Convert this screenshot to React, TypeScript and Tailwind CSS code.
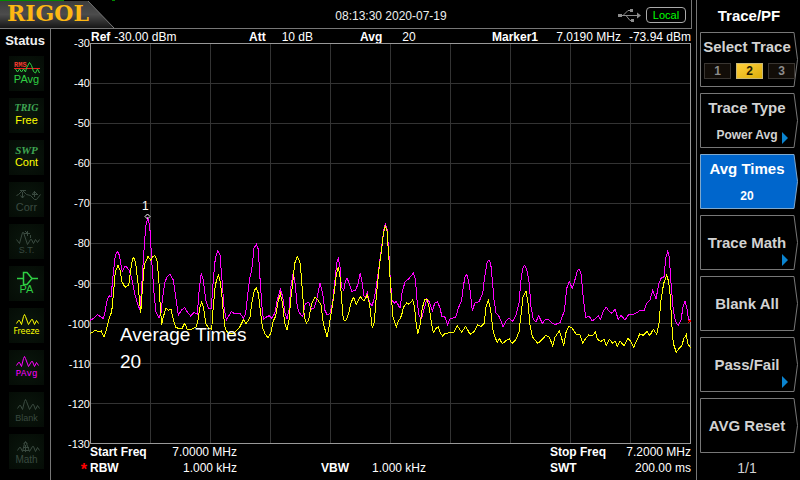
import { useState } from "react";
import type { ReactNode } from "react";
import clsx from "clsx";

type Segment = { x: number; y: number; points: string };

// Trace samples, three units per screen pixel, split in sweep segments
const averageTrace: Segment[] = [
  {
    x: 0,
    y: 471,
    points:
      "0,361 8,357 22,344 32,350 40,356 45,335 50,305 57,287 63,290 70,220 76,168 82,154 88,165 93,195 97,213 105,199 111,202 118,212 125,235 135,285 143,312 150,330 155,260 160,180 167,80 173,55 179,75 185,180 192,280 198,335 207,354 213,340 218,290 225,245 232,230 240,223 250,240 257,290 265,345 275,330 284,322 293,338 302,348 312,337 322,342 328,265 334,220 340,240 347,300 356,326 364,326 370,240 376,175 383,152 390,165 396,240 402,320 409,360 418,345 424,335 434,341 450,340 460,355 467,340 472,295",
  },
  {
    x: 450,
    y: 471,
    points:
      "29,235 35,210 42,145 49,133 55,148 61,250 66,320 70,358 78,352 87,347 95,355 104,340 112,300 121,268 128,290 135,340 141,357 147,330 152,265 160,218 166,255 172,320 178,338 188,350 196,312 206,307 214,328 222,325 230,300 240,250 248,280 254,330 262,345 270,340 278,305 285,240 290,190 295,175 300,200 304,260 311,271 316,245 321,235 328,250 335,274 346,271 353,255 361,220 367,250 372,288 377,292 382,278 389,308 396,317 403,295 410,250 418,195 425,140 431,90 436,72 441,88 446,150 451,240 456,300 463,310 469,304",
  },
  {
    x: 900,
    y: 471,
    points:
      "30,325 36,280 45,245 55,238 63,228 70,220 76,235 82,310 88,350 95,355 103,325 110,298 118,305 127,333 134,310 143,305 150,325 156,350 164,350 173,374 180,356 197,352 205,325 215,300 220,260 225,230 230,223 236,245 241,275 247,333 254,310 268,304 278,280 284,230 291,188 297,180 302,190 307,240 312,300 318,338 328,350 339,380 348,362 358,355 368,364 378,345 387,310 393,240 398,205 404,196 410,208 417,245 423,320 430,358 438,365 446,347",
  },
  {
    x: 1350,
    y: 531,
    points:
      "7,310 15,300 24,298 34,307 44,314 60,308 66,290 73,275 80,205 88,185 97,205 104,182 112,152 118,148 124,165 128,215 134,270 138,293 147,288 157,303 165,297 175,288 182,298 190,272 199,262 208,275 216,280 225,268 235,298 243,286 255,300 266,283 276,285 290,278 301,271 312,273 320,250 330,240 338,211 348,236 357,190 363,175 372,170 377,115 383,94 388,110 393,190 400,270 406,303 415,317 423,300 429,262 435,243 440,262 445,295 452,306",
  },
];

const frozenTrace: Segment[] = [
  {
    x: 0,
    y: 471,
    points:
      "0,401 8,397 15,390 24,394 34,393 42,412 50,385 56,360 65,335 70,285 76,215 84,196 90,210 96,245 105,262 116,255 121,220 127,180 131,172 137,190 144,250 152,340 157,270 163,195 174,169 182,180 188,170 195,167 202,185 207,250 211,320 215,374 220,350 228,325 236,331 243,328 249,355 257,382 265,385 275,387 284,370 292,388 305,387 318,382 324,360 330,320 335,307 341,325 347,370 355,383 365,388 369,330 376,255 385,224 391,245 396,290 401,350 406,388 415,400 430,402 447,385 455,370 460,358 468,372 474,362",
  },
  {
    x: 450,
    y: 471,
    points:
      "30,350 37,300 43,272 49,263 55,280 61,330 67,380 74,400 84,413 92,400 99,365 107,348 113,310 121,281 127,305 134,370 141,391 147,360 152,300 158,250 164,190 172,169 181,190 187,270 193,350 199,370 206,360 214,315 225,290 234,300 243,315 250,370 261,410 267,380 275,330 283,275 289,225 295,200 300,230 305,300 310,358 317,363 326,340 334,305 341,292 349,314 361,290 372,304 382,285 389,315 397,385 403,365 409,290 416,215 425,145 431,95 436,78 441,92 447,180 453,280 459,350 469,382 475,362",
  },
  {
    x: 900,
    y: 471,
    points:
      "30,356 35,345 40,323 50,308 57,313 68,300 74,325 78,365 83,402 90,375 97,325 104,297 111,297 118,325 124,365 130,398 138,385 145,380 151,400 158,408 166,400 192,397 202,377 215,397 227,379 240,403 252,395 263,374 273,380 283,370 287,325 295,300 302,330 308,385 314,410 322,427 328,415 337,431 348,422 358,417 366,430 378,418 387,395 393,345 399,290 408,274 414,310 420,375 427,410 443,430",
  },
  {
    x: 1350,
    y: 531,
    points:
      "0,365 10,355 17,346 28,352 38,377 45,352 58,332 64,350 71,378 77,340 86,319 97,325 108,342 119,343 128,370 137,355 146,345 158,347 166,335 172,357 182,365 192,358 199,377 208,358 218,370 225,363 232,379 240,363 252,377 263,355 273,365 281,382 290,362 299,342 310,346 321,334 329,347 340,328 350,343 357,310 363,240 371,190 380,166 386,185 391,230 395,310 400,370 409,397 417,385 425,378 432,355 439,344 444,372 452,384",
  },
];

const toPoints = (segments: Segment[]) =>
  segments
    .flatMap(({ x, y, points }) =>
      points.split(" ").map((pair) => {
        const [px, py] = pair.split(",").map(Number);
        return `${((px + x) / 3).toFixed(1)},${((py + y) / 3).toFixed(1)}`;
      }),
    )
    .join(" ");

const levels = [-30, -40, -50, -60, -70, -80, -90, -100, -110, -120, -130];
const divisions = [1, 2, 3, 4, 5, 6, 7, 8, 9];

const wave =
  "7.5,15.5 9.5,12.5 10.5,12.5 12.5,16.5 14.5,8.5 15.5,6.5 16.5,8.5 19.5,16.5 22.5,11.5 23.5,11.5 25.5,16.5 27.5,12.5 29.5,15.5";
const dimWave =
  "8.5,16.5 10.5,13.5 11.5,13.5 13.5,17.5 15.5,9.5 16.5,7.5 17.5,9.5 20.5,17.5 23.5,12.5 24.5,12.5 26.5,17.5 28.5,13.5 30.5,16.5";

const StatusIcon = ({ children }: { children: ReactNode }) => (
  <svg
    aria-hidden
    viewBox="0 0 35 21"
    className="h-[21px] w-full"
    fill="none"
    stroke="currentColor"
  >
    {children}
  </svg>
);

const statusItems: {
  id: string;
  label: string;
  color: string;
  labelClass: string;
  icon: ReactNode;
}[] = [
  {
    id: "detector",
    label: "PAvg",
    color: "text-[#2fd043]",
    labelClass: "-mt-1 text-[11px]",
    icon: (
      <StatusIcon>
        <text x="5" y="11" fill="#f03a30" stroke="none" className="font-mono text-[7px] font-bold">
          RMS
        </text>
        <path d="M5 12.5H31" stroke="#f02020" />
        <polyline points="6.5,13 8.5,16 10.5,13 12.5,16 14.5,13 16.5,16 17.5,12 20.5,6.5 22.5,9.5 24.5,15.5 26.5,17 28.5,13 30.5,17" />
      </StatusIcon>
    ),
  },
  {
    id: "trigger",
    label: "Free",
    color: "text-[#ffff00]",
    labelClass: "-mt-1 text-[11px]",
    icon: (
      <span className="h-5 font-['Liberation_Serif',serif] text-[10px] leading-5 font-bold text-[#3fa653] italic">
        TRIG
      </span>
    ),
  },
  {
    id: "sweep",
    label: "Cont",
    color: "text-[#ffff00]",
    labelClass: "-mt-1 text-[11px]",
    icon: (
      <span className="h-5 font-['Liberation_Serif',serif] text-[11px] leading-5 font-bold text-[#3fa653] italic">
        SWP
      </span>
    ),
  },
  {
    id: "correction",
    label: "Corr",
    color: "text-[#3a4a40]",
    labelClass: "-mt-0.5 text-[11px]",
    icon: (
      <StatusIcon>
        <polyline points="7.5,13.5 9.5,12.5 13.5,8.5 17.5,12.5 21.5,13.5 25.5,17.5 27.5,17.5 31.5,12.5" />
        <path d="M11 8.5H17M13.5 10V16M11.5 13.5L13.5 16L15.5 13.5M23 12.5H29M25.5 9V15M23.5 12L25.5 9.5L28 12" />
      </StatusIcon>
    ),
  },
  {
    id: "signal-track",
    label: "S.T.",
    color: "text-[#3a4a40]",
    labelClass: "-mt-px text-[9px]",
    icon: (
      <StatusIcon>
        <polyline points="7.5,15.5 10.5,19.5 13.5,8.5 14.5,8.5 18.5,20.5 21.5,15.5 22.5,15.5 24.5,19.5 26.5,15.5 28.5,18.5 30.5,15.5" />
        <path d="M15 9.5H21M18.5 7V12M16 7L18 9M21.5 11V14" />
      </StatusIcon>
    ),
  },
  {
    id: "preamp",
    label: "PA",
    color: "text-[#2fd043]",
    labelClass: "-mt-1 text-[11px]",
    icon: (
      <StatusIcon>
        <path d="M8 12.5H14M23 12.5H29" strokeWidth="1.5" />
        <path d="M14.5 6.5H18L23 12.5L18 18.5H14.5Z" strokeWidth="1.5" />
      </StatusIcon>
    ),
  },
  {
    id: "trace-freeze",
    label: "Freeze",
    color: "text-[#ffff00]",
    labelClass: "-mt-[3px] font-['DejaVu_Sans',sans-serif] text-[8px]",
    icon: (
      <StatusIcon>
        <polyline points={wave} />
      </StatusIcon>
    ),
  },
  {
    id: "trace-average",
    label: "PAvg",
    color: "text-[#ff00ff]",
    labelClass: "-mt-[3px] font-['Liberation_Mono',monospace] text-[9px]",
    icon: (
      <StatusIcon>
        <polyline points={wave} />
      </StatusIcon>
    ),
  },
  {
    id: "trace-blank",
    label: "Blank",
    color: "text-[#3a4a40]",
    labelClass: "-mt-px text-[9px]",
    icon: (
      <StatusIcon>
        <polyline points={dimWave} />
      </StatusIcon>
    ),
  },
  {
    id: "trace-math",
    label: "Math",
    color: "text-[#3a4a40]",
    labelClass: "-mt-px text-[10px]",
    icon: (
      <StatusIcon>
        <polyline points={dimWave} />
        <path d="M14 13.5H20M14 16.5H20M16.5 11V18M14.5 10L16.5 8L18.5 10" />
      </StatusIcon>
    ),
  },
];

const StatusBar = () => (
  <aside className="w-[51px] shrink-0 border-r border-[#777] text-center">
    <h2 className="mb-[7px] pt-[3px] text-[13px] leading-[17px] font-bold text-[#f0f0f0]">Status</h2>
    <ul className="flex flex-col gap-[7px] pr-[6px] pl-[9px]">
      {statusItems.map((item) => (
        <li
          key={item.id}
          className={clsx(
            "flex h-[35px] flex-col items-center bg-radial from-[#0b160d] to-[#050c06]",
            item.color,
          )}
        >
          {item.icon}
          <span className={clsx("leading-3", item.labelClass)}>{item.label}</span>
        </li>
      ))}
    </ul>
  </aside>
);

const TopBar = () => (
  <header className="relative mr-1 flex h-[29px] items-center border-r border-b border-[#777] pr-[5px]">
    <div className="relative h-full w-[114px]">
      <svg aria-hidden viewBox="0 0 116 28" className="absolute inset-0 h-full w-[116px]">
        <defs>
          <linearGradient id="tab" x1="0" y1="0" x2="0" y2="1">
            <stop offset="0" stopColor="#3c3c3c" />
            <stop offset="0.5" stopColor="#4c4c4c" />
            <stop offset="1" stopColor="#161616" />
          </linearGradient>
        </defs>
        <path d="M0 1H88L114 28H0Z" fill="url(#tab)" />
        <path d="M88 1L114 28" stroke="#777" />
        <path d="M0 .5H64M112 .5H115" stroke="#008a00" />
      </svg>
      <h1 className="relative pl-[7px] font-['DejaVu_Serif',serif] text-[22px] leading-[27px] font-bold text-[#fdb813]">
        RIGOL
      </h1>
    </div>
    <time className="flex-1 pt-1 pl-[50px] text-center text-xs text-[#eee]">
      08:13:30 2020-07-19
    </time>
    <svg
      aria-label="USB"
      viewBox="0 0 24 16"
      className="mt-0.5 mr-1 h-4 w-6"
      fill="none"
      stroke="#8c8c8c"
    >
      <path d="M2 8.5H20M5 8.5L10 3.5H13M8 8.5L12 13.5H15" />
      <path d="M19 5.5L23 8.5L19 11.5Z" fill="#8c8c8c" stroke="none" />
      <rect x="0" y="7" width="4" height="3" fill="#8c8c8c" stroke="none" />
      <rect x="12" y="2" width="3" height="3" fill="#8c8c8c" stroke="none" />
      <rect x="13" y="12" width="3" height="3" fill="#8c8c8c" stroke="none" />
    </svg>
    <span className="mt-0.5 h-4 w-10 rounded-[4px] border border-[#aaa] text-center text-[11px] leading-[15px] text-[#00ff00]">
      Local
    </span>
  </header>
);

const Spectrum = () => (
  <div className="relative">
    <svg
      role="img"
      aria-label="Spectrum traces"
      viewBox="0 0 601 401"
      preserveAspectRatio="none"
      className="h-full w-full"
      fill="none"
      shapeRendering="crispEdges"
    >
      {divisions.map((n) => (
        <g key={n} stroke="#333">
          <path d={`M${n * 60 + 0.5} 0V401`} />
          <path d={`M0 ${n * 40 + 0.5}H601`} />
        </g>
      ))}
      <rect x="0.5" y="0.5" width="600" height="400" stroke="#999" />
      <polyline points={toPoints(averageTrace)} stroke="#ff00ff" />
      <polyline points={toPoints(frozenTrace)} stroke="#ffff00" />
      <path d="M57.5 171L60 173.5L57.5 176L55 173.5Z" stroke="#fff" shapeRendering="auto" />
      <text x="52" y="167" fill="#fff" className="text-xs">
        1
      </text>
      <path d="M598 277L602 280M602 277L598 280M600 278H601" stroke="#f00" />
    </svg>
    <p className="absolute top-[278px] left-[30px] text-[19px] leading-[27px] text-white">
      Average Times
      <br />
      20
    </p>
  </div>
);

const Readouts = () => (
  <div className="grid h-[14px] grid-cols-[159fr_111fr_132fr_199fr] text-xs leading-[17px] whitespace-nowrap">
    <p className="flex gap-1 pl-px">
      <b>Ref</b> <span>-30.00 dBm</span>
    </p>
    <p className="flex gap-4">
      <b>Att</b> <span>10 dB</span>
    </p>
    <p className="flex gap-5">
      <b>Avg</b> <span>20</span>
    </p>
    <p className="flex justify-between">
      <b>Marker1</b>
      <span className="flex gap-2">
        <span>7.0190 MHz</span>
        <span>-73.94 dBm</span>
      </span>
    </p>
  </div>
);

const Settings = () => (
  <div className="grid h-9 grid-cols-[147fr_84fr_105fr_124fr_141fr] content-start text-xs leading-4 whitespace-nowrap">
    <p className="flex justify-between">
      <b>Start Freq</b> <span>7.0000 MHz</span>
    </p>
    <p className="col-start-5 flex justify-between">
      <b>Stop Freq</b> <span>7.2000 MHz</span>
    </p>
    <p className="flex justify-between">
      <b>RBW</b> <span>1.000 kHz</span>
    </p>
    <p className="col-start-3 flex justify-between">
      <b>VBW</b> <span>1.000 kHz</span>
    </p>
    <p className="col-start-5 flex justify-between">
      <b>SWT</b> <span>200.00 ms</span>
    </p>
  </div>
);

// Frame shared by the soft keys, with the pointed right edge
const KeyFrame = ({ active = false }: { active?: boolean }) => (
  <svg
    aria-hidden
    viewBox="0 0 98 55"
    preserveAspectRatio="none"
    className="absolute inset-0 h-full w-full"
  >
    <path
      d="M.5 .5H94L97.5 27.5L94 54.5H.5Z"
      fill={active ? "#0066cc" : "#000"}
      stroke={active ? "#7fa8cc" : "#777"}
    />
  </svg>
);

const softKeys = [
  { label: "Trace Type", value: "Power Avg", more: true },
  { label: "Avg Times", value: "20", active: true },
  { label: "Trace Math", more: true },
  { label: "Blank All" },
  { label: "Pass/Fail", more: true },
  { label: "AVG Reset" },
];

const TraceMenu = () => {
  const [trace, setTrace] = useState(2);

  return (
    <nav className="flex w-[104px] shrink-0 flex-col border-l border-[#777] pr-[2px] pl-[3px] text-center font-bold text-[#d2d2d2]">
      <h2 className="pt-[6px] pb-[6px] text-[15px] leading-5 text-white">Trace/PF</h2>
      <div className="flex flex-col gap-[6px]">
        <div role="group" aria-label="Select Trace" className="relative h-[55px]">
          <KeyFrame />
          <p className="relative pt-[5px] pr-1 text-[15px] leading-5">Select Trace</p>
          <div className="relative mt-[6px] flex gap-[5px] pr-[3px] pl-1">
            {[1, 2, 3].map((n) => (
              <button
                key={n}
                type="button"
                aria-pressed={trace === n}
                onClick={() => setTrace(n)}
                className={clsx(
                  "h-4 flex-1 border text-xs leading-[14px]",
                  trace === n
                    ? "border-[#c8b878] bg-linear-to-br from-[#ffcf3a] to-[#dcae00] text-[#201800]"
                    : "border-[#3a3632] bg-[#120d08] text-[#8c8c8c]",
                )}
              >
                {n}
              </button>
            ))}
          </div>
        </div>
        {softKeys.map((key) => (
          <button
            key={key.label}
            type="button"
            className={clsx(
              "relative flex h-[55px] flex-col items-center py-[5px] pr-1",
              key.value ? "justify-between" : "justify-center",
              key.active && "text-white",
            )}
          >
            <KeyFrame active={key.active} />
            <span className="relative text-[15px] leading-5">{key.label}</span>
            {key.value && <span className="relative text-xs leading-4">{key.value}</span>}
            {key.more && (
              <svg
                aria-hidden
                viewBox="0 0 6 12"
                className="absolute right-[10px] bottom-1 h-3 w-1.5"
              >
                <path d="M0 0L6 6L0 12Z" fill="#0a84d0" />
              </svg>
            )}
          </button>
        ))}
      </div>
      <p className="pt-[5px] pr-1 text-sm leading-5 font-normal">1/1</p>
    </nav>
  );
};

const App = () => {
  return (
    <div className="flex min-h-screen bg-black font-['Liberation_Sans',Arial,sans-serif] text-white">
      <div className="flex min-w-0 flex-1 flex-col">
        <TopBar />
        <div className="flex flex-1">
          <StatusBar />
          <main className="grid flex-1 grid-cols-[39px_1fr] grid-rows-[14px_1fr_36px] pr-[5px]">
            <div className="col-start-2">
              <Readouts />
            </div>
            <ul className="-my-2 flex flex-col justify-between text-right text-[11px] leading-4">
              {levels.map((level) => (
                <li key={level}>{level}</li>
              ))}
            </ul>
            <Spectrum />
            <span className="pt-4 pr-[3px] text-right text-base leading-5 font-bold text-[#ff0000]">
              *
            </span>
            <Settings />
          </main>
        </div>
      </div>
      <TraceMenu />
    </div>
  );
};

export default App;
